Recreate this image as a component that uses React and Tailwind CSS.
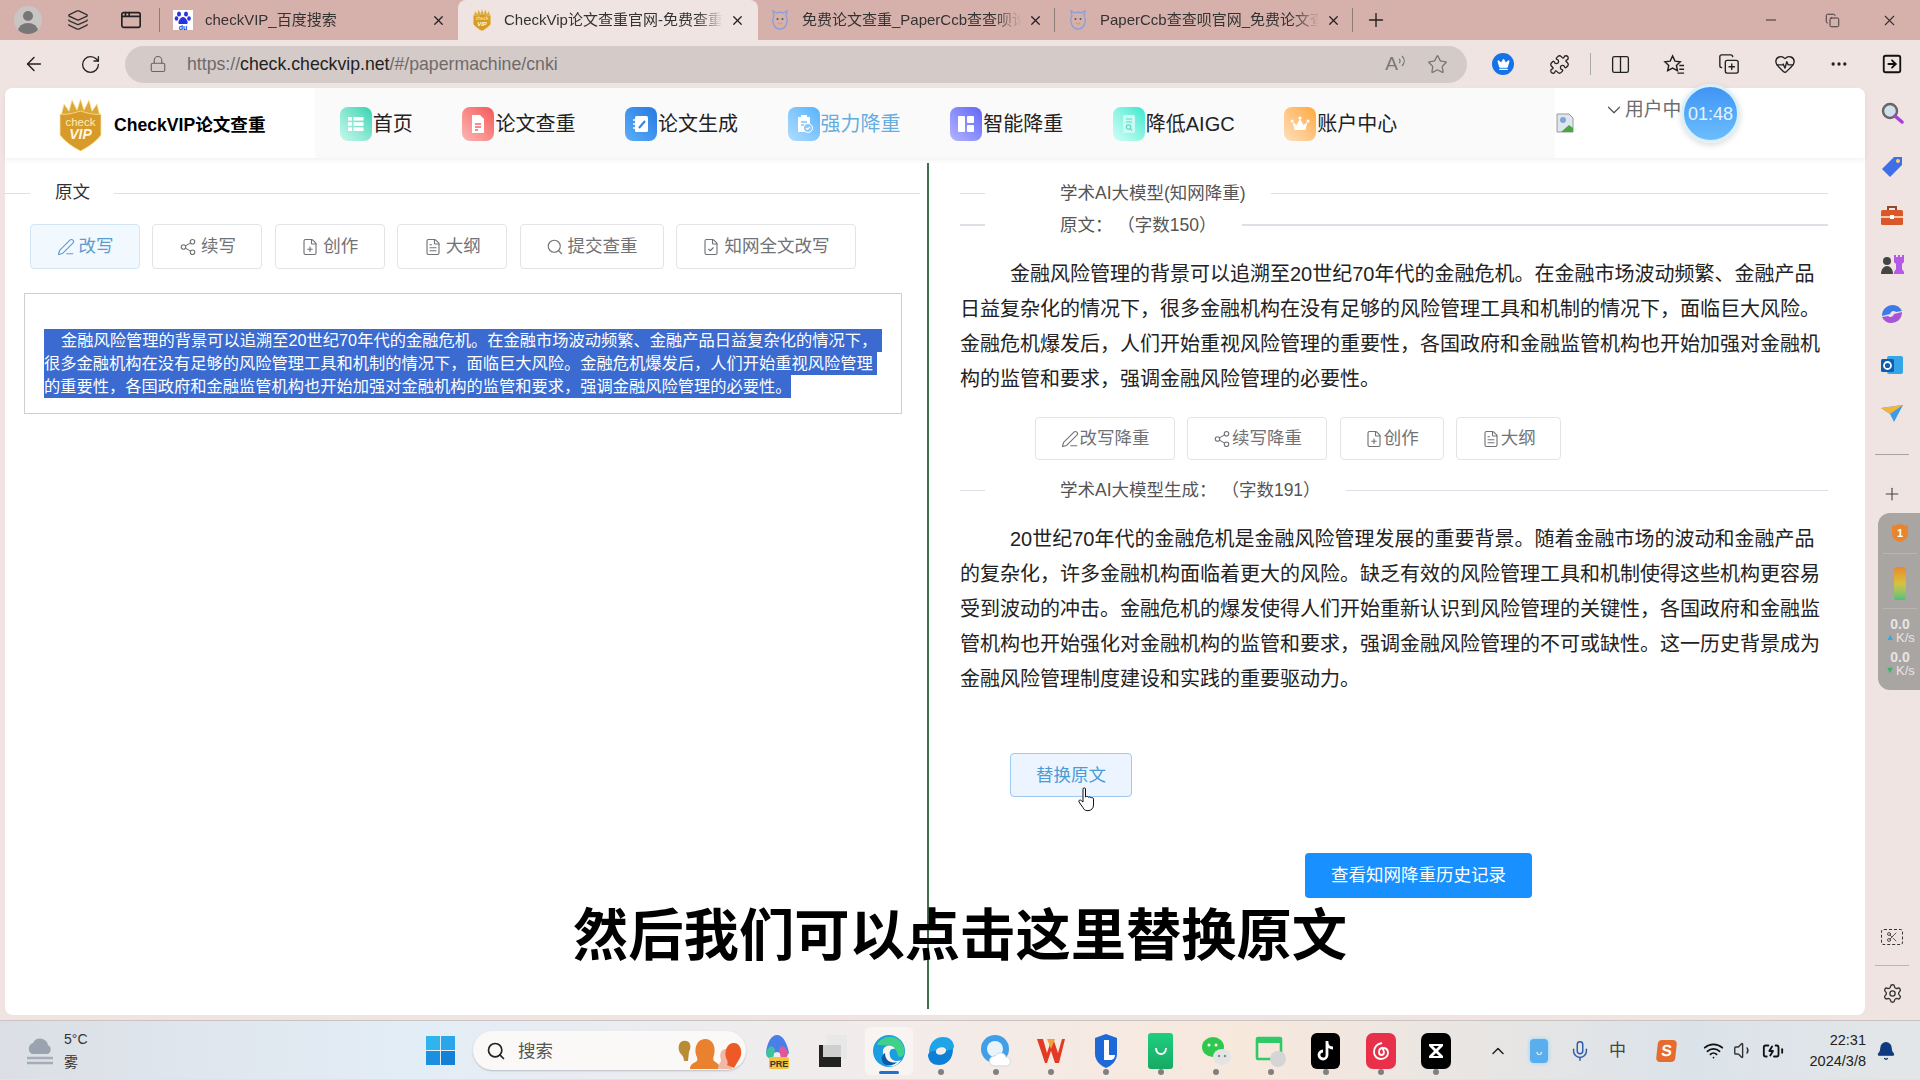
import {
  ArrowLeft, RotateCw, Lock, Star, Puzzle, Columns2, CopyPlus, HeartPulse, Ellipsis, SquareArrowRight,
  X, Plus, Minus, Copy, PenLine, Share2, FilePlus, FileText, Search, FileCheck, ChevronDown, ChevronUp,
  Mic, Wifi, Volume1, BatteryCharging, Bell, Settings, Scissors, Layers, AppWindow, Crown,
} from 'lucide-react'

const tabs = [
  { title: 'checkVIP_百度搜索', icon: <BaiduIcon />, w: 'w-[295px] pl-[10px]' },
  { title: 'CheckVip论文查重官网-免费查重', icon: <ShieldIcon size={20} />, w: 'w-[300px] pl-[14px]', active: true },
  { title: '免费论文查重_PaperCcb查查呗论文', icon: <CatIcon />, w: 'w-[297px] pl-[12px]', sep: true },
  { title: 'PaperCcb查查呗官网_免费论文查重', icon: <CatIcon />, w: 'w-[298px] pl-[13px]', sep: true },
]

const navItems = [
  { label: '首页', glyph: <HomeGlyph />, bg: 'from-[#1fd4b2] to-[#c4f9ee]' },
  { label: '论文查重', glyph: <DocGlyph />, bg: 'from-[#f25658] to-[#fbb6b6]' },
  { label: '论文生成', glyph: <NoteGlyph />, bg: 'from-[#2579e4] to-[#5cadf6]' },
  { label: '强力降重', glyph: <ClipGlyph />, bg: 'from-[#55b2fb] to-[#aeddff]', active: true },
  { label: '智能降重', glyph: <SmartGlyph />, bg: 'from-[#6464f6] to-[#b4b4ff]' },
  { label: '降低AIGC', glyph: <AigcGlyph />, bg: 'from-[#1ee8d0] to-[#ccfff6]' },
  { label: '账户中心', glyph: <CrownGlyph />, bg: 'from-[#ffa935] to-[#ffdfba]' },
]

const leftButtons = [
  { label: '改写', Icon: PenLine, w: 'w-[110px]', active: true },
  { label: '续写', Icon: Share2, w: 'w-[110px]' },
  { label: '创作', Icon: FilePlus, w: 'w-[110px]' },
  { label: '大纲', Icon: FileText, w: 'w-[110px]' },
  { label: '提交查重', Icon: Search, w: 'w-[144px]' },
  { label: '知网全文改写', Icon: FileCheck, w: 'w-[180px]' },
]

const rightButtons = [
  { label: '改写降重', Icon: PenLine, w: 'w-[140px]' },
  { label: '续写降重', Icon: Share2, w: 'w-[140px]' },
  { label: '创作', Icon: FilePlus, w: 'w-[104px]' },
  { label: '大纲', Icon: FileText, w: 'w-[105px]' },
]

const selectedLines = [
  { text: '金融风险管理的背景可以追溯至20世纪70年代的金融危机。在金融市场波动频繁、金融产品日益复杂化的情况下，', w: 'w-[838px] pl-[17px]' },
  { text: '很多金融机构在没有足够的风险管理工具和机制的情况下，面临巨大风险。金融危机爆发后，人们开始重视风险管理', w: 'w-[833px]' },
  { text: '的重要性，各国政府和金融监管机构也开始加强对金融机构的监管和要求，强调金融风险管理的必要性。', w: 'w-[747px]' },
]

export default function App() {
  return (
    <div className="relative h-[1080px] w-[1920px] overflow-hidden bg-[#efe4e1] font-['Liberation_Sans','Noto_Sans_CJK_SC',sans-serif] [text-spacing-trim:space-all]">
      <TabBar />
      <Toolbar />
      <div className="flex h-[932px]">
        <Page />
        <SidePanel />
      </div>
      <Taskbar />
      <div className="absolute left-[573px] top-[898px] whitespace-nowrap text-[55.3px] font-bold leading-[76px] text-black">
        然后我们可以点击这里替换原文
      </div>
      <Pointer />
    </div>
  )
}

function TabBar() {
  return (
    <div className="flex h-[40px] items-center bg-[#d6b0ab]">
      <div className="ml-[14px] flex h-[28px] w-[28px] items-center justify-center overflow-hidden rounded-full bg-[#c9c5c3]">
        <svg viewBox="0 0 28 28" className="h-[28px] w-[28px]">
          <circle cx="14" cy="10" r="5" fill="#777" />
          <ellipse cx="14" cy="25" rx="10" ry="8" fill="#777" />
        </svg>
      </div>
      <Layers className="ml-[25px] h-[22px] w-[22px] text-[#333]" strokeWidth={1.5} />
      <AppWindow className="ml-[31px] h-[22px] w-[22px] text-[#222]" strokeWidth={1.8} />
      <div className="ml-[17px] h-[24px] w-px bg-[#8f7b78]" />
      <div className="ml-[3px] flex h-[40px]">
        {tabs.map((tab) => (
          <div
            key={tab.title}
            className={`relative flex h-[40px] items-center ${tab.w} ${tab.active ? 'rounded-t-[8px] bg-[#efe4e1]' : ''}`}
          >
            <div className="flex w-[32px] shrink-0 items-center">{tab.icon}</div>
            <div className="w-[219px] overflow-hidden whitespace-nowrap text-[15px] leading-[20px] text-[#333] [mask-image:linear-gradient(90deg,#000_88%,transparent)]">{tab.title}</div>
            <X className="ml-[7px] h-[15px] w-[15px] shrink-0 text-[#222]" strokeWidth={2} />
            {tab.sep && <div className="absolute right-0 h-[24px] w-px bg-[#8f7b78]" />}
          </div>
        ))}
      </div>
      <Plus className="ml-[12px] h-[22px] w-[22px] text-[#222]" strokeWidth={1.5} />
      <Minus className="ml-[376px] h-[16px] w-[16px] text-[#333]" strokeWidth={1.5} />
      <Copy className="ml-[46px] h-[15px] w-[15px] text-[#333]" strokeWidth={1.5} />
      <X className="ml-[41px] h-[17px] w-[17px] text-[#333]" strokeWidth={1.5} />
    </div>
  )
}

function Toolbar() {
  return (
    <div className="flex h-[48px] items-center">
      <ArrowLeft className="ml-[23px] h-[22px] w-[22px] text-[#222]" strokeWidth={1.6} />
      <RotateCw className="ml-[35px] h-[21px] w-[21px] text-[#222]" strokeWidth={1.5} />
      <div className="ml-[24px] flex h-[37px] w-[1342px] items-center rounded-full bg-[#d4cbc9]">
        <Lock className="ml-[24px] h-[18px] w-[18px] text-[#6b6462]" strokeWidth={1.5} />
        <div className="ml-[20px] whitespace-nowrap text-[17.7px] leading-[22px] text-[#6f6a69]">
          https://<span className="text-[#222]">check.checkvip.net</span>/#/papermachine/cnki
        </div>
        <div className="ml-auto flex items-center">
          <span className="text-[19px] leading-[20px] text-[#777]">A</span>
          <svg viewBox="0 0 8 14" fill="none" stroke="#777" strokeWidth="1.2" className="mb-[6px] h-[14px] w-[8px]">
            <path d="M1 5c1.500 1 1.500 3 0 4M4 2c3 3 3 7 0 10" />
          </svg>
          <Star className="ml-[21px] mr-[19px] h-[21px] w-[21px] text-[#777]" strokeWidth={1.5} />
        </div>
      </div>
      <div className="ml-[25px] flex h-[22px] w-[22px] items-center justify-center rounded-full bg-[#1473e6]">
        <Crown className="h-[13px] w-[13px] text-white" fill="white" />
      </div>
      <Puzzle className="ml-[35px] h-[21px] w-[21px] text-[#222]" strokeWidth={1.5} />
      <div className="ml-[20px] h-[22px] w-px bg-[#aaa]" />
      <Columns2 className="ml-[19px] h-[21px] w-[21px] text-[#222]" strokeWidth={1.5} />
      <FavoritesIcon />
      <CopyPlus className="ml-[32px] h-[22px] w-[22px] text-[#222]" strokeWidth={1.5} />
      <HeartPulse className="ml-[34px] h-[22px] w-[22px] text-[#222]" strokeWidth={1.5} />
      <Ellipsis className="ml-[33px] h-[20px] w-[20px] text-[#222]" strokeWidth={2} />
      <SquareArrowRight className="ml-[32px] h-[22px] w-[22px] text-[#111]" strokeWidth={2} />
    </div>
  )
}

function Page() {
  return (
    <div className="ml-[5px] h-[927px] w-[1860px] shrink-0 rounded-[8px] bg-white">
      <Nav />
      <div className="flex">
        <LeftColumn />
        <RightColumn />
      </div>
    </div>
  )
}

function Nav() {
  return (
    <div className="relative flex h-[70px] items-center rounded-t-[8px] bg-white shadow-[0_2px_5px_rgba(0,0,0,0.06)]">
      <div className="flex w-[310px] shrink-0 items-center pl-[53px] pt-[4px]">
        <ShieldIcon size={45} tall />
        <div className="ml-[11px] whitespace-nowrap text-[17.6px] font-bold leading-[24px] text-black">CheckVIP论文查重</div>
      </div>
      <div className="flex h-[70px] w-[1240px] shrink-0 bg-[#fafafa] pt-[2px]">
        {navItems.map((item) => (
          <div key={item.label} className="flex items-center px-[24.8px]">
            <div className={`flex h-[34px] w-[32px] items-center justify-center rounded-[8px] bg-linear-to-bl ${item.bg}`}>
              {item.glyph}
            </div>
            <span className={`ml-px whitespace-nowrap text-[20px] leading-[28px] ${item.active ? 'text-[#66addf]' : 'text-[#222]'}`}>{item.label}</span>
          </div>
        ))}
      </div>
      <div className="flex flex-1 items-center">
        <BrokenImage />
        <div className="mb-[26px] ml-[28px] flex items-center">
          <ChevronDown className="h-[22px] w-[22px] text-[#555]" strokeWidth={1.3} />
          <span className="w-[56px] overflow-hidden whitespace-nowrap text-[18.75px] leading-[24px] text-[#6a6c70]">用户中心</span>
        </div>
      </div>
      <div className="absolute left-[1676px] top-[-4px] flex h-[59px] w-[59px] items-center justify-center rounded-full border-[3px] border-[#d9f0fb] bg-linear-to-b from-[#3f95f4] to-[#6cbdfd] text-[18px] leading-[24px] text-[#e4f3ff] shadow-[0_2px_6px_rgba(0,0,0,0.15)]">
        01:48
      </div>
    </div>
  )
}

function LeftColumn() {
  return (
    <div className="mt-[5px] h-[846px] w-[924px] shrink-0 border-r-2 border-[#3f6f48]">
      <div className="mr-[7px] mt-[18px] flex h-[24px] items-center">
        <div className="h-px w-[25px] bg-[#dcdfe6]" />
        <span className="mb-[2px] ml-[25px] text-[17.5px] leading-[24px] text-[#303133]">原文</span>
        <div className="ml-[24px] h-px flex-1 bg-[#dcdfe6]" />
      </div>
      <div className="ml-[25px] mt-[19px] flex gap-[12.4px]">
        {leftButtons.map((b) => (
          <OutlineButton key={b.label} {...b} h="h-[45px]" gap="gap-[4px]" />
        ))}
      </div>
      <div className="ml-[19px] mt-[24px] h-[121px] w-[878px] border border-[#cfcfcf] pl-[19px] pt-[35px]">
        {selectedLines.map((line) => (
          <div key={line.text} className={`h-[23px] whitespace-nowrap bg-[#3b6bd0] text-[16.25px] leading-[23px] text-white ${line.w}`}>
            {line.text}
          </div>
        ))}
      </div>
    </div>
  )
}

function RightColumn() {
  return (
    <div className="mt-[5px] w-[934px] pl-[31px]">
      <Divider className="mt-[18px]" text="学术AI大模型(知网降重)" />
      <Divider className="mt-[8px]" text="原文： （字数150）" thick />
      <p className="mt-[20px] w-[866px] indent-[50px] text-[20px] leading-[35px] text-[#222]">
        金融风险管理的背景可以追溯至20世纪70年代的金融危机。在金融市场波动频繁、金融产品日益复杂化的情况下，很多金融机构在没有足够的风险管理工具和机制的情况下，面临巨大风险。金融危机爆发后，人们开始重视风险管理的重要性，各国政府和金融监管机构也开始加强对金融机构的监管和要求，强调金融风险管理的必要性。
      </p>
      <div className="ml-[75px] mt-[20px] flex gap-[12.4px]">
        {rightButtons.map((b) => (
          <OutlineButton key={b.label} {...b} h="h-[43px]" gap="gap-[1px]" />
        ))}
      </div>
      <Divider className="mt-[18px]" text="学术AI大模型生成： （字数191）" />
      <p className="mt-[20px] w-[866px] indent-[50px] text-[20px] leading-[35px] text-[#222]">
        20世纪70年代的金融危机是金融风险管理发展的重要背景。随着金融市场的波动和金融产品的复杂化，许多金融机构面临着更大的风险。缺乏有效的风险管理工具和机制使得这些机构更容易受到波动的冲击。金融危机的爆发使得人们开始重新认识到风险管理的关键性，各国政府和金融监管机构也开始强化对金融机构的监管和要求，强调金融风险管理的不可或缺性。这一历史背景成为金融风险管理制度建设和实践的重要驱动力。
      </p>
      <button className="ml-[50px] mt-[56px] block h-[44px] w-[122px] rounded-[4px] border border-[#9ccaf0] bg-[#ecf5ff] text-[17.5px] text-[#4a9ad8]">
        替换原文
      </button>
      <button className="ml-[345px] mt-[56px] block h-[45px] w-[227px] rounded-[4px] bg-[#1890ff] text-[17.5px] text-white">
        查看知网降重历史记录
      </button>
    </div>
  )
}

function Divider({ text, thick, className }) {
  return (
    <div className={`flex h-[24px] w-[868px] items-center ${className}`}>
      <div className={`w-[25px] bg-[#dcdfe6] ${thick ? 'h-[2px]' : 'h-px'}`} />
      <span className="ml-[75px] whitespace-nowrap text-[17.5px] leading-[24px] text-[#555]">{text}</span>
      <div className={`ml-[25px] flex-1 bg-[#dcdfe6] ${thick ? 'h-[2px]' : 'h-px'}`} />
    </div>
  )
}

function OutlineButton({ label, Icon, w, h, gap, active }) {
  return (
    <div
      className={`flex items-center justify-center rounded-[4px] border text-[17.5px] ${gap} ${w} ${h} ${
        active ? 'border-[#d3e6f5] bg-[#f2f9fe] text-[#5c9bd1]' : 'border-[#e2e4e8] bg-white text-[#707276]'
      }`}
    >
      <Icon className="h-[18px] w-[18px]" strokeWidth={1.5} />
      {label}
    </div>
  )
}

function SidePanel() {
  return (
    <div className="relative flex w-[55px] flex-col items-center pr-[1px]">
      <svg viewBox="0 0 24 24" className="mt-[14px] h-[24px] w-[24px]">
        <circle cx="10" cy="9" r="7" fill="#cfe0ea" stroke="#666" strokeWidth="2.4" />
        <path d="M15 14l7 6" stroke="#a640d6" strokeWidth="3.5" strokeLinecap="round" />
      </svg>
      <svg viewBox="0 0 24 24" className="mt-[28px] h-[24px] w-[24px]">
        <path d="M2 15L14 3h8v8L10 23z" fill="#3f6fe8" />
        <circle cx="18" cy="7" r="2" fill="#ffcf6b" />
      </svg>
      <svg viewBox="0 0 24 20" className="mt-[28px] h-[20px] w-[24px]">
        <path d="M8 4V1h8v3" fill="none" stroke="#8d4a2c" strokeWidth="2" />
        <rect x="1" y="4" width="22" height="15" rx="1.5" fill="#d9572a" />
        <rect x="1" y="10" width="22" height="2" fill="#f4c9a4" />
        <rect x="10" y="9" width="4" height="4" fill="#fff" />
      </svg>
      <svg viewBox="0 0 26 22" className="mt-[27px] h-[22px] w-[26px]">
        <circle cx="8" cy="8" r="4" fill="#444" />
        <path d="M2 21c0-5 3-8 6-8s6 3 6 8z" fill="#444" />
        <path d="M15 2h2v2h2V2h2v2h2V2h2v7l-2 2v5l2 3v2H15v-2l2-3v-5l-2-2z" fill="#b45ae6" />
      </svg>
      <svg viewBox="0 0 24 24" className="mt-[27px] h-[24px] w-[24px]">
        <path d="M2 14C2 7 7 3 13 3c4 0 7 2 9 6l-6 1c-2-2-5-1-6 2z" fill="#3d7be8" />
        <path d="M22 10c0 7-5 11-11 11-4 0-7-2-9-6l6-1c2 2 5 1 6-2z" fill="#a755d8" />
      </svg>
      <svg viewBox="0 0 24 24" className="mt-[27px] h-[24px] w-[24px]">
        <rect x="7" y="3" width="16" height="18" rx="2" fill="#35a5e8" />
        <rect x="1" y="6" width="13" height="13" rx="1.5" fill="#0a5fb4" />
        <circle cx="7.5" cy="12.5" r="3.5" fill="none" stroke="#fff" strokeWidth="1.8" />
      </svg>
      <svg viewBox="0 0 24 20" className="mt-[27px] h-[20px] w-[24px]">
        <path d="M1 4l22-3-9 17-4-8z" fill="#3e9be8" />
        <path d="M1 4l9 6 13-9z" fill="#f1b53c" />
      </svg>
      <div className="mt-[30px] h-px w-[34px] bg-[#a8a2a0]" />
      <Plus className="mt-[29px] h-[20px] w-[20px] text-[#444]" strokeWidth={1.3} />
      <div className="absolute left-[13px] top-[425px] flex h-[177px] w-[42px] flex-col items-center rounded-l-[12px] bg-[#a9a5a3] pl-[2px] text-[#e6e4e3]">
        <svg viewBox="0 0 20 20" className="mt-[10px] h-[20px] w-[20px]">
          <path d="M2 3l8-2 8 2v8c0 4-4 7-8 8-4-1-8-4-8-8z" fill="#e8842c" />
          <text x="10" y="14" textAnchor="middle" fontSize="11" fontWeight="700" fill="#fff">1</text>
        </svg>
        <div className="mt-[10px] h-px w-[34px] bg-[#b9b5b3]" />
        <div className="mt-[13px] h-[33px] w-[12px] rounded-[3px] bg-linear-to-b from-[#e8892e] via-[#d6c13d] to-[#45c27a]" />
        <div className="mt-[8px] h-px w-[34px] bg-[#b9b5b3]" />
        <div className="mt-[9px] text-[14px] font-bold leading-[13px]">0.0</div>
        <div className="flex items-center text-[13px] leading-[13px]"><span className="text-[9px] text-[#2fa8e8]">▲</span><span className="ml-[2px]">K/s</span></div>
        <div className="mt-[7px] text-[14px] font-bold leading-[13px]">0.0</div>
        <div className="flex items-center text-[13px] leading-[13px]"><span className="text-[9px] text-[#2fb86a]">▼</span><span className="ml-[2px]">K/s</span></div>
      </div>
      <div className="mt-auto flex flex-col items-center pb-[16px]">
        <div className="flex h-[16px] w-[22px] items-center justify-center rounded-[3px] border border-dashed border-[#333]">
          <Scissors className="h-[12px] w-[12px] text-[#333]" strokeWidth={1.6} />
        </div>
        <div className="mt-[20px] h-px w-[34px] bg-[#bcb5b3]" />
        <Settings className="mt-[17px] h-[21px] w-[21px] text-[#333]" strokeWidth={1.5} />
      </div>
    </div>
  )
}

function Taskbar() {
  const apps = [<NextIcon key="n" />, <QuarkIcon key="q" />, <WpsIcon key="w" />, <LIcon key="l" />, <GreenIcon key="g" />, <WeChatIcon key="we" />, <ChatWindowIcon key="c" />, <TikTokIcon key="t" />, <NeteaseIcon key="ne" />, <CapCutIcon key="cc" />]
  return (
    <div className="flex h-[60px] items-center border-t border-[#c9c3c1] bg-[linear-gradient(90deg,#dbdfe5,#e3edf6_21%,#f3ecea_47%,#f7e8dc_65%,#dbe3ea_88%,#e3e6e8)] shadow-[inset_0_-1px_0_#c5f5cf]">
      <svg viewBox="0 0 32 32" className="ml-[24px] h-[32px] w-[32px]">
        <path d="M8 19a6 6 0 0 1 1-11 8 8 0 0 1 15 2 5 5 0 0 1 0 9z" fill="#9aa4b0" />
        <path d="M3 23h26M3 28h26" stroke="#a5aeb8" strokeWidth="2.4" />
      </svg>
      <div className="ml-[8px] w-[40px] text-[14px] leading-[23px] text-[#333]">
        <div>5°C</div>
        <div>雾</div>
      </div>
      <div className="ml-[322px] grid h-[29px] w-[29px] grid-cols-2 gap-px">
        <div className="bg-[#2fb4ee]" /><div className="bg-[#2aa6ea]" /><div className="bg-[#1b90e0]" /><div className="bg-[#1480d6]" />
      </div>
      <div className="ml-[18px] flex h-[39px] w-[273px] items-center rounded-full bg-[#fbf9f8] shadow-[0_1px_2px_rgba(0,0,0,0.2)]">
        <Search className="ml-[13px] h-[20px] w-[20px] text-[#222]" strokeWidth={2} />
        <span className="ml-[12px] text-[17.5px] leading-[24px] text-[#555]">搜索</span>
        <SearchPeople />
      </div>
      <svg viewBox="0 0 28 36" className="ml-[17px] h-[36px] w-[28px]">
        <path d="M3 20C4 10 8 2 14 2s10 8 12 18c-3 4-6 0-12-1-6 1-8 4-11 1z" fill="#4b7fe8" />
        <path d="M3 20c3-8 6-8 9-4l-2 10c-4 0-7-2-7-6z" fill="#3ec2a0" />
        <path d="M25 20c-3-8-6-8-9-4l2 10c4 0 7-2 7-6z" fill="#e0589c" />
        <rect x="6" y="24" width="20" height="12" rx="2" fill="#f3c43a" />
        <text x="16" y="34" textAnchor="middle" fontSize="9" fontWeight="700" fill="#333">PRE</text>
      </svg>
      <svg viewBox="0 0 28 32" className="ml-[28px] h-[32px] w-[28px]">
        <rect x="8" y="0" width="20" height="24" fill="#e8e8e8" />
        <rect x="0" y="10" width="22" height="22" fill="#222" />
        <rect x="4" y="10" width="18" height="12" fill="#cfcfcf" />
      </svg>
      <div className="relative ml-[18px] flex h-[48px] w-[48px] items-center justify-center rounded-[5px] bg-[#f8f4f2]">
        <EdgeIcon />
        <div className="absolute bottom-[1px] h-[3px] w-[20px] rounded-full bg-[#1d6fd1]" />
      </div>
      <div className="flex">
        {apps.map((icon, i) => (
          <div key={i} className="relative flex h-[48px] w-[55px] items-center justify-center">
            {icon}
            <div className="absolute bottom-0 h-[6px] w-[6px] rounded-full bg-[#808080]" />
          </div>
        ))}
      </div>
      <ChevronUp className="ml-[25px] h-[20px] w-[20px] text-[#222]" strokeWidth={1.8} />
      <div className="ml-[22px] flex h-[24px] w-[18px] items-center justify-center rounded-[4px] bg-[#5aaeee] text-[11px] leading-[14px] text-white shadow-[0_0_4px_#86d6ff]">ᴗ</div>
      <Mic className="ml-[21px] h-[22px] w-[22px] text-[#2f5da8]" strokeWidth={1.6} />
      <span className="ml-[18px] text-[17px] leading-[22px] text-[#444]">中</span>
      <div className="ml-[31px] flex h-[22px] w-[19px] skew-x-[-6deg] items-center justify-center rounded-[4px] bg-[#e56b2e] text-[16px] font-bold leading-[20px] text-white">S</div>
      <Wifi className="ml-[27px] h-[21px] w-[21px] text-[#111]" strokeWidth={2} />
      <Volume1 className="ml-[9px] h-[21px] w-[21px] text-[#333]" strokeWidth={1.6} />
      <BatteryCharging className="ml-[8px] h-[22px] w-[22px] text-[#111]" strokeWidth={2} />
      <div className="ml-[12px] w-[70px] text-right text-[14.5px] leading-[21px] text-[#222]">
        <div>22:31</div>
        <div>2024/3/8</div>
      </div>
      <Bell className="ml-[10px] h-[20px] w-[20px] text-[#103a80]" fill="#103a80" strokeWidth={1.6} />
    </div>
  )
}

function Pointer() {
  return (
    <svg viewBox="0 0 18 25" className="absolute left-[1078px] top-[787px] h-[25px] w-[18px]">
      <path
        d="M5 2c0-1.5 2.5-1.5 2.5 0v8c1-1 2.5-.8 2.8.3 1-.7 2.4-.4 2.6.6 1-.6 2.6-.2 2.6 1.2v6c0 3-2 5-4.5 5.500H9c-2 0-3-1-4-3L1 15c-.8-1.500 1-2.800 2.200-1.500L5 15z"
        fill="#fff"
        stroke="#111"
        strokeWidth="1"
      />
    </svg>
  )
}

function SearchPeople() {
  return (
    <svg viewBox="0 0 64 36" className="ml-auto mr-[4px] h-[36px] w-[64px]">
      <path d="M1 12c1-5 9-6 11-1 1 3 0 6-1 8l-1 9H6c0-4-2-6-4-8-1-2-2-5-1-8z" fill="#bb8c36" />
      <path d="M12 36c0-5 4-6 7-8 1-2 0-4-1-6-2-7 1-16 9-16s11 8 9 16c-1 3-1 5 0 6 3 2 6 4 7 8z" fill="#e9812f" />
      <path d="M40 36c0-5 3-6 3-9-2-6 0-11 5-11s7 6 5 11l1 9z" fill="#f2b8a6" />
      <path d="M49 32c1-2 1-4-1-7-2-7 1-15 8-15 6 0 8 7 7 12-1 4-3 6-4 8l-3 5z" fill="#ed5a28" />
    </svg>
  )
}

function FavoritesIcon() {
  return (
    <svg viewBox="0 0 24 24" fill="none" stroke="#222" strokeWidth="1.5" className="ml-[32px] h-[23px] w-[23px]">
      <path d="M10 3l2.500 5.500 5.500.6-4 3.900 1.100 5.500L10 15.700 4.900 18.500 6 13 2 9.100l5.500-.6z" />
      <path d="M17 13h5M17 17h5M15 21h7" />
    </svg>
  )
}

function BrokenImage() {
  return (
    <svg viewBox="0 0 20 22" className="h-[22px] w-[20px]">
      <path d="M2 2h12l4 4v14H2z" fill="#dfe7ee" stroke="#9a9a9a" />
      <circle cx="8" cy="8" r="3" fill="#7ea7d8" />
      <path d="M6 20l8-7 4 3v4z" fill="#4aa63f" />
    </svg>
  )
}

function ShieldIcon({ size, tall }) {
  const h = tall ? size * 1.16 : size * 1.1
  return (
    <svg viewBox="0 0 45 52" width={size} height={h} className="shrink-0">
      <path d="M3 17L6 5l5 7 3-11 5 10 3.500-11L26 11l5-10 3 11 5-7 3 12z" fill="#dba63a" stroke="#f7e6a0" strokeWidth="0.800" />
      <path d="M2 15c7 1 13-1 20.500-3C30 14 36 16 43 15v21c-5 7-13 12-20.500 16C15 48 7 43 2 36z" fill="#d89a28" stroke="#f7e6a0" strokeWidth="0.800" />
      <text x="22.500" y="27" textAnchor="middle" fontSize="11.500" fontWeight="400" fill="#fdeeb8">check</text>
      <text x="22.500" y="40" textAnchor="middle" fontSize="14" fontWeight="700" fontStyle="italic" fill="#fff8e0">VIP</text>
    </svg>
  )
}

function HomeGlyph() {
  return (
    <svg viewBox="0 0 20 20" className="h-[20px] w-[20px]" fill="#fff">
      <rect x="2" y="3" width="4" height="3.600" /><rect x="7.500" y="3" width="10" height="3.600" />
      <rect x="2" y="8.200" width="4" height="3.600" /><rect x="7.500" y="8.200" width="10" height="3.600" />
      <rect x="2" y="13.400" width="4" height="3.600" /><rect x="7.500" y="13.400" width="10" height="3.600" />
    </svg>
  )
}

function DocGlyph() {
  return (
    <svg viewBox="0 0 20 20" className="h-[20px] w-[20px]">
      <path d="M4 1h8l4 4v14H4z" fill="#fff" />
      <path d="M7 10h6M7 13h6M7 16h3" stroke="#f06a6c" strokeWidth="1.300" />
    </svg>
  )
}

function NoteGlyph() {
  return (
    <svg viewBox="0 0 20 20" className="h-[20px] w-[20px]">
      <rect x="4" y="2" width="13" height="16" rx="1.500" fill="#fff" />
      <path d="M2 6h4M2 10h4M2 14h4" stroke="#fff" strokeWidth="1.300" />
      <path d="M8 14l6-7" stroke="#2f83e8" strokeWidth="2" />
    </svg>
  )
}

function ClipGlyph() {
  return (
    <svg viewBox="0 0 20 20" className="h-[20px] w-[20px]">
      <path d="M4 3h3V1h6v2h3v15H4z" fill="#fff" />
      <path d="M7 8h6M7 11h3" stroke="#7cc4fb" strokeWidth="1.300" />
      <circle cx="14" cy="14" r="4.500" fill="#8acbfc" stroke="#fff" />
      <path d="M12 14l1.500 1.500L16 13" fill="none" stroke="#fff" strokeWidth="1.200" />
    </svg>
  )
}

function SmartGlyph() {
  return (
    <svg viewBox="0 0 20 20" className="h-[20px] w-[20px]" fill="#fff">
      <rect x="2" y="2" width="7" height="16" rx="1" />
      <rect x="11" y="2" width="7" height="7" rx="1" />
      <rect x="11" y="11" width="7" height="7" rx="1" />
    </svg>
  )
}

function AigcGlyph() {
  return (
    <svg viewBox="0 0 20 20" className="h-[20px] w-[20px]">
      <rect x="4" y="1" width="12" height="18" rx="1.500" fill="#c9fbf3" />
      <path d="M7 5h6M7 8h6" stroke="#5fd8c8" strokeWidth="1.200" />
      <circle cx="9.500" cy="13" r="2.200" fill="none" stroke="#5fd8c8" strokeWidth="1.200" />
      <path d="M11 14.500l2 2" stroke="#5fd8c8" strokeWidth="1.200" />
    </svg>
  )
}

function CrownGlyph() {
  return (
    <svg viewBox="0 0 20 20" className="h-[20px] w-[20px]" fill="#fff">
      <circle cx="10" cy="4" r="1.500" /><circle cx="2" cy="7" r="1.500" /><circle cx="18" cy="7" r="1.500" />
      <path d="M2.500 8L6.500 11 10 5l3.500 6 4-3-2 8H4.500z" />
    </svg>
  )
}

function BaiduIcon() {
  return (
    <svg viewBox="0 0 20 20" className="h-[20px] w-[20px]">
      <rect width="20" height="20" fill="#fff" />
      <ellipse cx="6" cy="4" rx="2" ry="2.500" fill="#2932e1" />
      <ellipse cx="13" cy="4" rx="2" ry="2.500" fill="#2932e1" />
      <ellipse cx="3.500" cy="8.500" rx="1.800" ry="2.200" fill="#2932e1" />
      <ellipse cx="16" cy="8.500" rx="1.800" ry="2.200" fill="#2932e1" />
      <path d="M10 7c3 0 6 6 4 7H6c-2-1 1-7 4-7z" fill="#2932e1" />
      <text x="10" y="19.500" textAnchor="middle" fontSize="7" fontWeight="700" fill="#2932e1">du</text>
    </svg>
  )
}

function CatIcon() {
  return (
    <svg viewBox="0 0 20 22" className="h-[22px] w-[20px]" fill="none">
      <path d="M4 7L3 2l4 2c2-1 4-1 6 0l4-2-1 5c3 5 0 13-6 13S1 12 4 7z" stroke="#8b9fd8" strokeWidth="1.300" />
      <circle cx="7.500" cy="10" r="1" fill="#555" />
      <circle cx="12.500" cy="10" r="1" fill="#555" />
      <path d="M8 14c1 1 3 1 4 0" stroke="#e0a040" strokeWidth="1.400" />
    </svg>
  )
}

function EdgeIcon() {
  return (
    <svg viewBox="0 0 32 36" className="h-[36px] w-[32px]">
      <circle cx="16" cy="18" r="16" fill="#1b9de2" />
      <path d="M4 12C8 2 24 0 30 12c3 6 1 12-3 12-3 0-2-5-5-8-6-5-14-3-18-4z" fill="#3fd08a" />
      <path d="M10 18c0-6 10-7 12-2-5-1-6 3-5 7 1 5 7 6 11 4-4 7-12 8-16 4-3-3-2-8-2-13z" fill="#f8f4f2" />
      <path d="M12 20c0 7 5 11 12 9-4 5-14 5-15-2-1-3 1-6 3-7z" fill="#0c59a4" />
    </svg>
  )
}

function NextIcon() {
  return (
    <svg viewBox="0 0 28 32" className="h-[32px] w-[28px]">
      <path d="M2 18C2 8 8 2 16 2c6 0 10 3 11 9 0 3-3 6-8 5 1-5-9-5-10 0z" fill="#1fa4e8" />
      <path d="M26 14c0 10-6 16-14 16-6 0-10-3-11-9 0-3 3-6 8-5-1 5 9 5 10 0z" fill="#0d7fd6" />
    </svg>
  )
}

function QuarkIcon() {
  return (
    <svg viewBox="0 0 32 36" className="h-[36px] w-[32px]">
      <circle cx="15" cy="16" r="14" fill="#3f9fe8" />
      <circle cx="15" cy="16" r="8" fill="#e8f4fc" />
      <path d="M14 33a5 5 0 0 1 1-10 6 6 0 0 1 11 1 4 4 0 0 1 0 9z" fill="#fff" stroke="#c9d8e2" />
    </svg>
  )
}

function WpsIcon() {
  return (
    <svg viewBox="0 0 30 28" className="h-[28px] w-[30px]">
      <path d="M1 2h6l4 14 4-12h3l4 12 4-14h3l-6 24h-4l-4-12-4 12H9z" fill="#e23a24" />
      <path d="M11 2h8l-4 10z" fill="#f4a03a" />
    </svg>
  )
}

function LIcon() {
  return (
    <svg viewBox="0 0 28 36" className="h-[36px] w-[28px]">
      <path d="M3 5l11-4 11 4v16c0 7-6 12-11 14C9 33 3 28 3 21z" fill="#1d69d8" />
      <path d="M12 7h5v15h6c0 3-2 5-5 5h-6z" fill="#fff" />
    </svg>
  )
}

function GreenIcon() {
  return (
    <div className="flex h-[36px] w-[25px] items-center justify-center rounded-[3px] bg-linear-to-b from-[#1fcf7e] to-[#17a964]">
      <svg viewBox="0 0 14 10" className="h-[10px] w-[14px]" fill="none"><path d="M2 2c0 8 10 8 10 0" stroke="#fff" strokeWidth="2" /></svg>
    </div>
  )
}

function WeChatIcon() {
  return (
    <svg viewBox="0 0 32 32" className="h-[32px] w-[32px]">
      <ellipse cx="13" cy="12" rx="11" ry="10" fill="#2dc84d" />
      <circle cx="9" cy="10" r="1.500" fill="#fff" />
      <circle cx="16" cy="10" r="1.500" fill="#fff" />
      <ellipse cx="22" cy="22" rx="9" ry="8" fill="#e4e4e4" />
      <circle cx="19" cy="21" r="1.200" fill="#888" />
      <circle cx="25" cy="21" r="1.200" fill="#888" />
    </svg>
  )
}

function ChatWindowIcon() {
  return (
    <svg viewBox="0 0 32 32" className="h-[32px] w-[32px]" fill="none">
      <rect x="2" y="3" width="24" height="21" rx="1" stroke="#2fca66" strokeWidth="2.600" />
      <rect x="2" y="3" width="24" height="5" fill="#2fca66" />
      <ellipse cx="23" cy="24" rx="8" ry="8" fill="#d5d5d5" />
    </svg>
  )
}

function TikTokIcon() {
  return (
    <div className="flex h-[36px] w-[29px] items-center justify-center rounded-[6px] bg-black">
      <svg viewBox="0 0 20 24" className="h-[24px] w-[20px]" fill="none">
        <path d="M11 2v14a4 4 0 1 1-4-4M11 3c0 4 3 6 6 6" stroke="#fff" strokeWidth="2.800" />
      </svg>
    </div>
  )
}

function NeteaseIcon() {
  return (
    <div className="flex h-[36px] w-[30px] items-center justify-center rounded-[7px] bg-[#e8304a]">
      <svg viewBox="0 0 20 20" className="h-[20px] w-[20px]" fill="none">
        <path d="M11 2C6 3 3 6 3 11c0 4 3 7 7 7s7-3 7-6-2-5-5-5-4 2-4 4 1 3 2.500 3 2.500-1 2.500-3L11 6" stroke="#fff" strokeWidth="1.800" />
      </svg>
    </div>
  )
}

function CapCutIcon() {
  return (
    <div className="flex h-[36px] w-[30px] items-center justify-center rounded-[7px] bg-black">
      <svg viewBox="0 0 20 20" className="h-[20px] w-[20px]">
        <path d="M3 3h14v2l-5 5 5 5v2H3v-2l5-5-5-5z" fill="#fff" />
        <path d="M7 5h6l-3 3zM7 15h6l-3-3z" fill="#000" />
      </svg>
    </div>
  )
}
